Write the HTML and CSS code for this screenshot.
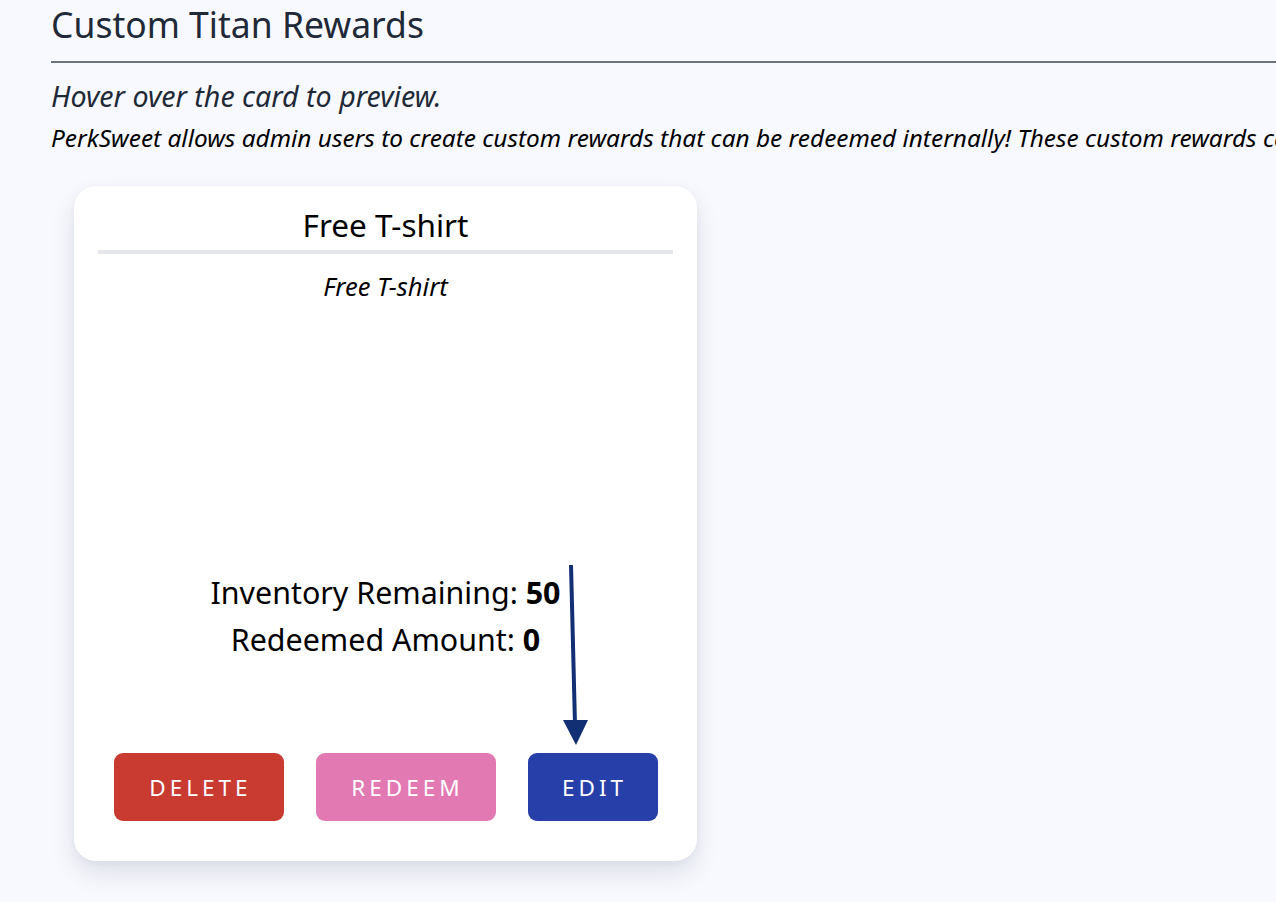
FILE: index.html
```html
<!DOCTYPE html>
<html>
<head>
<meta charset="utf-8">
<link rel="stylesheet" href="styles.css">
</head>
<body>
<main class="page">
  <h1 class="title">Custom Titan Rewards</h1>
  <hr class="rule">
  <p class="hint">Hover over the card to preview.</p>
  <p class="desc">PerkSweet allows admin users to create custom rewards that can be redeemed internally! These custom rewards can be anything your company wants to offer.</p>
  <section class="card">
    <h2 class="card-title">Free T-shirt</h2>
    <div class="card-divider"></div>
    <p class="card-sub">Free T-shirt</p>
    <div class="card-stats">
      <p>Inventory Remaining: <b>50</b></p>
      <p>Redeemed Amount: <b>0</b></p>
    </div>
    <div class="card-actions">
      <button class="btn btn-delete">DELETE</button>
      <button class="btn btn-redeem">REDEEM</button>
      <button class="btn btn-edit">EDIT</button>
    </div>
    <svg class="arrow" width="30" height="190" viewBox="0 0 30 190">
      <line x1="9" y1="2" x2="13" y2="162" stroke="#132f73" stroke-width="4"/>
      <polygon points="1,157 26,157 14,182" fill="#132f73"/>
    </svg>
  </section>
</main>
</body>
</html>
```
FILE: styles.css
```css
html, body {
  margin: 0;
  padding: 0;
  background: #f8f9fe;
  overflow: hidden;
}
body {
  font-family: "Noto Sans", sans-serif;
  width: 1276px;
  height: 902px;
}
.page {
  padding: 0 0 0 51px;
  width: 1600px;
}
.title {
  margin: 0;
  padding-top: 2px;
  font-size: 35.5px;
  font-weight: 400;
  color: #1f2937;
  line-height: 44px;
}
.rule {
  margin: 15px 0 0 0;
  border: 0;
  border-top: 2px solid #6b7280;
  height: 0;
}
.hint {
  margin: 16px 0 0 0;
  font-style: italic;
  font-size: 28.6px;
  line-height: 34px;
  color: #1f2937;
}
.desc {
  margin: 11px 0 0 0;
  font-style: italic;
  font-size: 24.4px;
  line-height: 28px;
  color: #000;
  white-space: nowrap;
}
.card {
  position: relative;
  box-sizing: border-box;
  margin: 34px 0 0 23px;
  width: 623px;
  height: 675px;
  background: #fff;
  border-radius: 22px;
  box-shadow: 0 12px 24px rgba(30, 40, 80, 0.12), 0 2px 6px rgba(30, 40, 80, 0.04);
  padding: 18px 24px 0 24px;
  display: flex;
  flex-direction: column;
  color: #000;
}
.card-title {
  margin: 0;
  text-align: center;
  font-weight: 400;
  font-size: 31.5px;
  line-height: 42px;
}
.card-divider {
  margin-top: 4px;
  height: 4px;
  background: #e5e7eb;
}
.card-sub {
  margin: 19px 0 0 0;
  text-align: center;
  font-style: italic;
  font-size: 25.5px;
  line-height: 26px;
}
.card-stats {
  margin-top: 270px;
  text-align: center;
  font-size: 30.4px;
  line-height: 47px;
}
.card-stats p {
  margin: 0;
}
.card-stats b {
  font-weight: 700;
}
.card-actions {
  margin-top: 90px;
  display: flex;
  justify-content: center;
  gap: 32px;
}
.btn {
  height: 68px;
  border: 0;
  border-radius: 9px;
  color: #fff;
  font-family: "Noto Sans", sans-serif;
  font-size: 22.5px;
  letter-spacing: 4px;
  text-indent: 4px;
  padding: 0;
}
.btn-delete { width: 170px; background: #c93a31; }
.btn-redeem { width: 180px; background: #e279b3; }
.btn-edit { width: 130px; background: #273fa8; }
.arrow {
  position: absolute;
  left: 488px;
  top: 377px;
}
```
